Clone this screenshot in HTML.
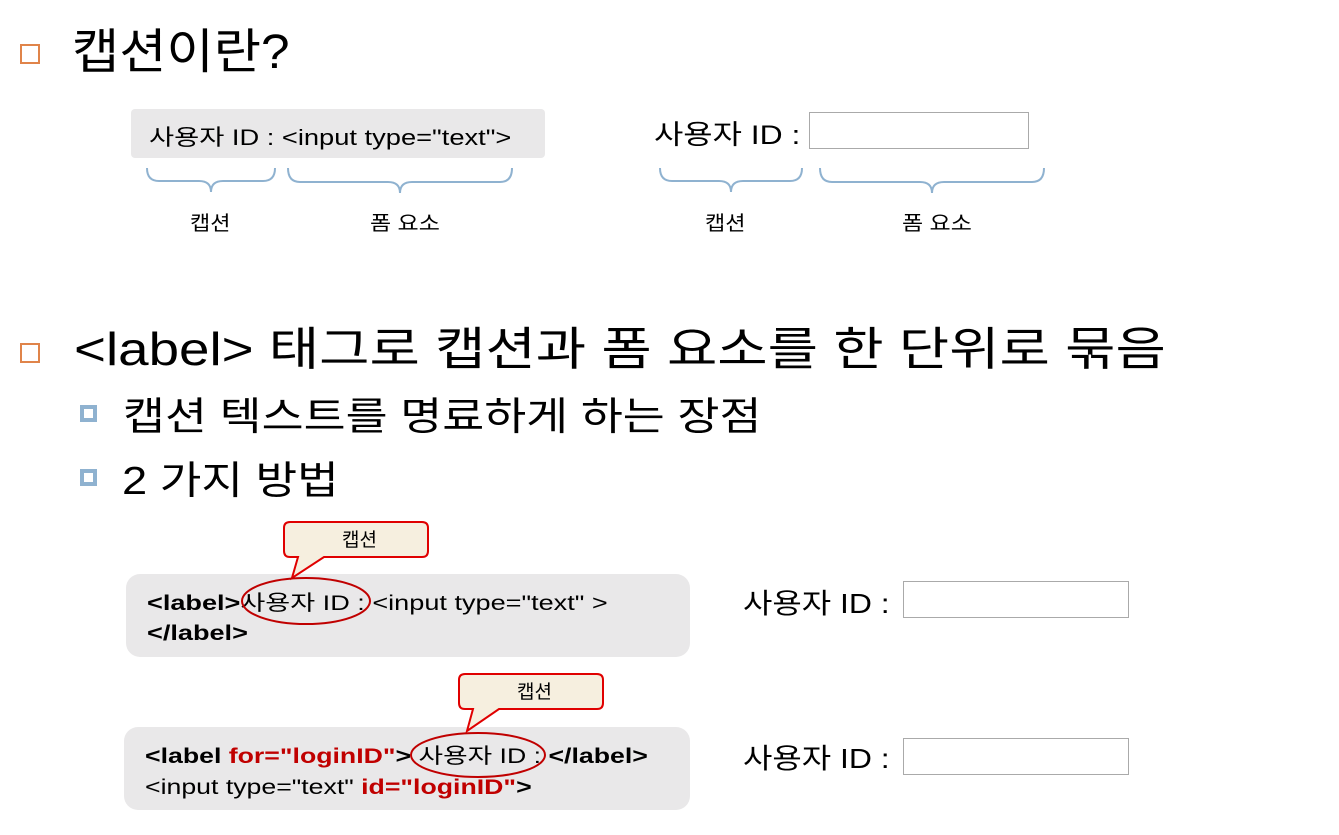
<!DOCTYPE html>
<html><head><meta charset="utf-8"><style>
body{margin:0;width:1339px;height:835px;background:#fff;position:relative;overflow:hidden;font-family:"Liberation Sans","Noto Sans CJK KR",sans-serif;color:#000}
.a{position:absolute;white-space:nowrap;transform-origin:0 50%}
.box{position:absolute;background:#e9e8e9}
.inp{position:absolute;border:1.5px solid #aaa;background:#fff;box-sizing:border-box}
.ob{position:absolute;width:16px;height:16px;border:2px solid #e0844a}
.bb{position:absolute;width:9px;height:9px;border:4px solid #8fb2d0;background:#fff}
b{font-weight:bold}.r{color:#c00000}
</style></head><body>
<div class="ob" style="left:20px;top:44px"></div>
<div class="a" style="left:72px;top:12px;font-size:48px;transform:scaleX(1.07)">캡션이란?</div>
<div class="box" style="left:131px;top:109px;width:414px;height:49px;border-radius:4px"></div>
<div class="a" style="left:149px;top:120px;font-size:22px;transform:scaleX(1.24)">사용자 ID : &lt;input type="text"&gt;</div>
<div class="a" style="left:654px;top:113px;font-size:27px;transform:scaleX(1.18)">사용자 ID :</div>
<div class="inp" style="left:809px;top:112px;width:220px;height:37px"></div>
<div class="a" style="left:190px;top:207px;font-size:20px;transform:scaleX(1.1)">캡션</div>
<div class="a" style="left:370px;top:207px;font-size:20px;transform:scaleX(1.15)">폼 요소</div>
<div class="a" style="left:705px;top:207px;font-size:20px;transform:scaleX(1.1)">캡션</div>
<div class="a" style="left:902px;top:207px;font-size:20px;transform:scaleX(1.15)">폼 요소</div>
<div class="ob" style="left:20px;top:343px"></div>
<div class="a" style="left:74px;top:313px;font-size:46px;transform:scaleX(1.19)">&lt;label&gt; 태그로 캡션과 폼 요소를 한 단위로 묶음</div>
<div class="bb" style="left:80px;top:405px"></div>
<div class="a" style="left:123px;top:386px;font-size:39px;transform:scaleX(1.17)">캡션 텍스트를 명료하게 하는 장점</div>
<div class="bb" style="left:80px;top:469px"></div>
<div class="a" style="left:122px;top:450px;font-size:39px;transform:scaleX(1.16)">2 가지 방법</div>
<div class="box" style="left:126px;top:574px;width:564px;height:83px;border-radius:14px"></div>
<div class="a" style="left:147px;top:589px;font-size:21px;line-height:30px;transform:scaleX(1.29);transform-origin:0 0"><b>&lt;label&gt;</b>사용자 ID : &lt;input type="text" &gt;<br><b>&lt;/label&gt;</b></div>
<div class="box" style="left:124px;top:727px;width:566px;height:83px;border-radius:14px"></div>
<div class="a" style="left:145px;top:741px;font-size:21px;line-height:31px;transform:scaleX(1.27);transform-origin:0 0"><b>&lt;label <span class="r">for="loginID"</span>&gt;</b> 사용자 ID : <b>&lt;/label&gt;</b><br>&lt;input type="text" <b class="r">id="loginID"</b><b>&gt;</b></div>
<div class="a" style="left:743px;top:582px;font-size:28px;transform:scaleX(1.14)">사용자 ID :</div>
<div class="inp" style="left:903px;top:581px;width:226px;height:37px"></div>
<div class="a" style="left:743px;top:737px;font-size:28px;transform:scaleX(1.14)">사용자 ID :</div>
<div class="inp" style="left:903px;top:738px;width:226px;height:37px"></div>
<svg class="a" style="left:0;top:0" width="1339" height="835">
<g fill="none" stroke="#8fb2d0" stroke-width="2">
<path d="M147 168 q0 13 12 13 h40 q12 0 12 11 q0-11 12-11 h40 q12 0 12-13"/>
<path d="M288 168 q0 14 12 14 h88 q12 0 12 11 q0-11 12-11 h88 q12 0 12-14"/>
<path d="M660 168 q0 13 12 13 h47 q12 0 12 11 q0-11 12-11 h47 q12 0 12-13"/>
<path d="M820 168 q0 14 12 14 h88 q12 0 12 11 q0-11 12-11 h88 q12 0 12-14"/>
</g>
<g fill="#f6efdf" stroke="#e00000" stroke-width="2">
<path d="M306 522 h116 q6 0 6 6 v23 q0 6-6 6 h-98 l-32 21 6-21 h-8 q-6 0-6-6 v-23 q0-6 6-6z"/>
<path d="M481 674 h116 q6 0 6 6 v23 q0 6-6 6 h-98 l-32 22 6-22 h-8 q-6 0-6-6 v-23 q0-6 6-6z"/>
</g>
<g fill="none" stroke="#c00000" stroke-width="2">
<ellipse cx="306" cy="601" rx="64" ry="23"/>
<ellipse cx="478" cy="755" rx="67" ry="22"/>
</g>
<text x="342" y="546" font-size="19" font-family="Liberation Sans,Noto Sans CJK KR,sans-serif">캡션</text>
<text x="517" y="698" font-size="19" font-family="Liberation Sans,Noto Sans CJK KR,sans-serif">캡션</text>
</svg>
</body></html>
